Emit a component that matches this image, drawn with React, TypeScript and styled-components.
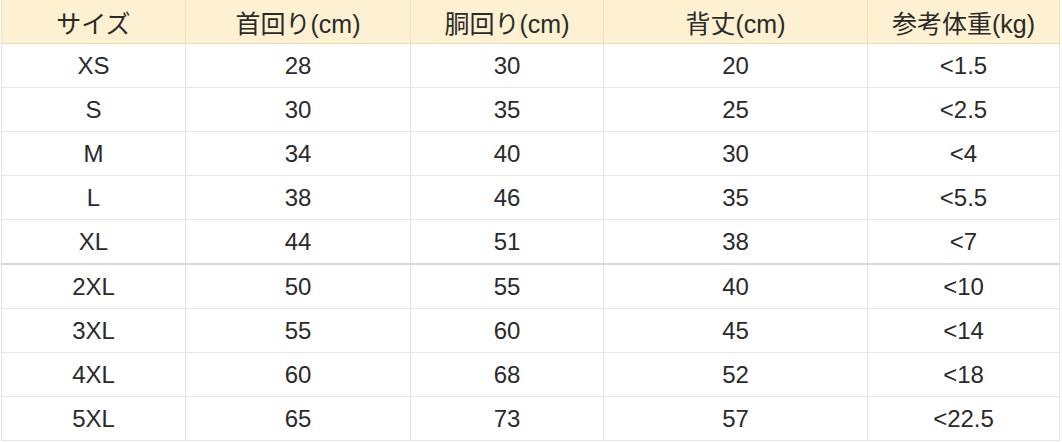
import React from "react";
import styled, { createGlobalStyle } from "styled-components";

const Global = createGlobalStyle`
  html, body { margin: 0; padding: 0; background: #ffffff; }
  body { font-family: "Liberation Sans", Arial, "Noto Sans CJK JP", sans-serif; }
`;

const Wrap = styled.div`
  padding: 0 0 0 1px;
`;

const Table = styled.table`
  width: 1058px;
  border-collapse: collapse;
  table-layout: fixed;
  color: #2a2a2a;
  font-size: 24px;
`;

const HeadCell = styled.th`
  height: 43px;
  padding: 0;
  background: #fdf1d2;
  font-weight: normal;
  font-size: 25px;
  text-align: center;
  vertical-align: middle;
  border-left: 1px solid #efe2bd;
  border-right: 1px solid #efe2bd;
  border-bottom: 1px solid #eadcb2;
  font-family: "Liberation Sans", Arial, "Noto Sans CJK JP", sans-serif;
`;

const Row = styled.tr<{ $strong?: boolean }>`
  border-bottom: ${(p) => (p.$strong ? "2px solid #d8d8d8" : "1px solid #e6e6e6")};
`;

const Cell = styled.td`
  height: 42px;
  padding: 1px 0 0;
  line-height: 1;
  text-align: center;
  vertical-align: middle;
  border-left: 1px solid #e4e4e4;
  border-right: 1px solid #e4e4e4;
`;

const widths = [184, 225, 193, 264, 192];
const headers = ["サイズ", "首回り(cm)", "胴回り(cm)", "背丈(cm)", "参考体重(kg)"];
const rows: string[][] = [
  ["XS", "28", "30", "20", "<1.5"],
  ["S", "30", "35", "25", "<2.5"],
  ["M", "34", "40", "30", "<4"],
  ["L", "38", "46", "35", "<5.5"],
  ["XL", "44", "51", "38", "<7"],
  ["2XL", "50", "55", "40", "<10"],
  ["3XL", "55", "60", "45", "<14"],
  ["4XL", "60", "68", "52", "<18"],
  ["5XL", "65", "73", "57", "<22.5"],
];

export default function App() {
  return (
    <Wrap>
      <Global />
      <Table>
        <colgroup>
          {widths.map((w, i) => (
            <col key={i} style={{ width: w }} />
          ))}
        </colgroup>
        <thead>
          <tr>
            {headers.map((h) => (
              <HeadCell key={h}>{h}</HeadCell>
            ))}
          </tr>
        </thead>
        <tbody>
          {rows.map((r, i) => (
            <Row key={r[0]} $strong={i === 4}>
              {r.map((c, j) => (
                <Cell key={j}>{c}</Cell>
              ))}
            </Row>
          ))}
        </tbody>
      </Table>
    </Wrap>
  );
}
